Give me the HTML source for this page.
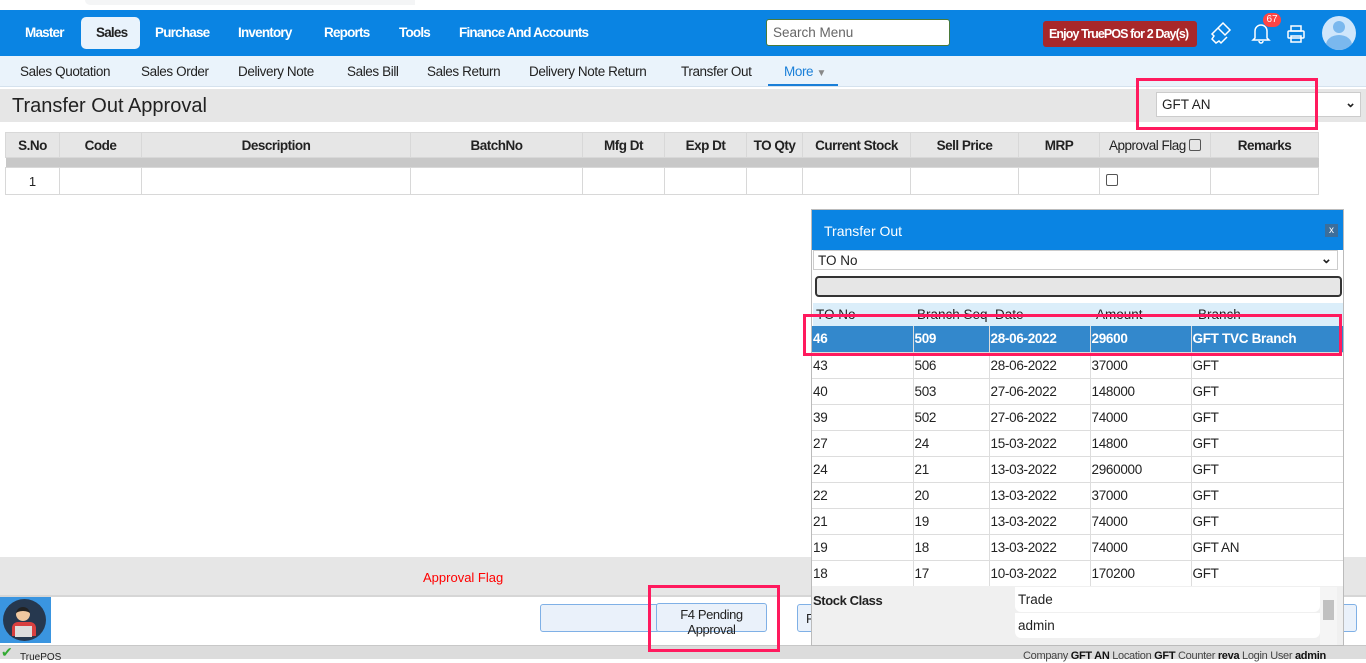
<!DOCTYPE html>
<html><head><meta charset="utf-8"><style>
*{box-sizing:border-box;margin:0;padding:0}
body{width:1366px;height:659px;overflow:hidden;background:#fff;font-family:"Liberation Sans",sans-serif;position:relative;font-size:13px;color:#222}
.a{position:absolute}
.nav{left:0;top:10px;width:1366px;height:46px;background:#0a84e3}
.nav span{position:absolute;top:15px;color:#fff;font-weight:bold;font-size:13.5px;letter-spacing:-0.8px;white-space:nowrap}
.sub{left:0;top:56px;width:1366px;height:31px;background:#eaf3fb;border-bottom:1px solid #d5e2ee}
.sub span{position:absolute;top:8px;font-size:13.5px;color:#222;letter-spacing:-0.4px;white-space:nowrap}
.red{position:absolute;border:3px solid #ff1a5e;z-index:10}
table{border-collapse:collapse}
.mt td{border:1px solid #d8d8d8;height:25px;text-align:center;padding:0}
.pt td{border-right:1px solid #ddd;border-bottom:1px solid #ddd;height:26px;padding-left:1px;font-size:13.5px;letter-spacing:-0.3px}
</style></head><body>
<div class="a" style="left:85px;top:0;width:330px;height:5px;background:#f4f5f6;border-radius:0 0 0 8px"></div>
<div class="nav a">
<div class="a" style="left:81px;top:7px;width:59px;height:32px;background:#e9f3fc;border-radius:5px"></div>
<span style="left:25px">Master</span><span style="left:96px;color:#222">Sales</span><span style="left:155px">Purchase</span><span style="left:238px">Inventory</span><span style="left:324px">Reports</span><span style="left:399px">Tools</span><span style="left:459px">Finance And Accounts</span>
<div class="a" style="left:766px;top:9px;width:184px;height:27px;background:#fff;border:1px solid #4a7a3a;border-radius:3px;color:#666;font-size:13.5px;padding:5px 6px">Search Menu</div>
<div class="a" style="left:1043px;top:11px;width:154px;height:26px;background:#a8282a;border-radius:3px;color:#fff;font-weight:bold;font-size:12.5px;letter-spacing:-0.9px;padding:6px 0 0 6px;white-space:nowrap">Enjoy TruePOS for 2 Day(s)</div>
<svg class="a" style="left:1209px;top:10px" width="24" height="26" viewBox="0 0 24 26" fill="none" stroke="#fff" stroke-width="1.5"><path d="M14 3l7 7-5 5-7-7z M9 8l-6 6 2 2-2 3 4 4 3-2 2 2 6-6"/></svg>
<svg class="a" style="left:1251px;top:12px" width="20" height="22" viewBox="0 0 20 22" fill="none" stroke="#fff" stroke-width="1.5"><path d="M4 16V9a6 6 0 0112 0v7l2 2H2z M8 19a2 2 0 004 0"/></svg>
<div class="a" style="left:1263px;top:3px;width:18px;height:14px;background:#f44;border-radius:7px;color:#fff;font-size:10px;text-align:center;line-height:14px">67</div>
<svg class="a" style="left:1286px;top:14px" width="20" height="20" viewBox="0 0 20 20" fill="none" stroke="#fff" stroke-width="1.5"><rect x="5" y="2" width="10" height="5"/><rect x="2" y="7" width="16" height="7" rx="1"/><rect x="5" y="12" width="10" height="6"/></svg>
<div class="a" style="left:1322px;top:6px;width:34px;height:34px;border-radius:50%;background:#cfe6fb;overflow:hidden"><div class="a" style="left:11px;top:5px;width:12px;height:12px;border-radius:50%;background:#7ab8ee"></div><div class="a" style="left:4px;top:19px;width:26px;height:20px;border-radius:50%;background:#7ab8ee"></div></div>
</div>
<div class="sub a">
<span style="left:20px">Sales Quotation</span><span style="left:141px">Sales Order</span><span style="left:238px">Delivery Note</span><span style="left:347px">Sales Bill</span><span style="left:427px">Sales Return</span><span style="left:529px">Delivery Note Return</span><span style="left:681px">Transfer Out</span><span style="left:784px;color:#1a7fd8">More <span style="position:static;color:#888;font-size:10px">▼</span></span>
<div class="a" style="left:768px;top:28px;width:70px;height:2px;background:#1a7fd8"></div>
</div>
<div class="a" style="left:0;top:89px;width:1366px;height:33px;background:#e6e6e6"></div>
<div class="a" style="left:12px;top:95px;font-size:20px;color:#222">Transfer Out Approval</div>
<div class="a" style="left:1156px;top:92px;width:205px;height:25px;background:#fff;border:1px solid #ccc;padding:4px 5px;font-size:13.5px">GFT AN<span style="position:absolute;right:4px;top:2px;font-size:13px;font-weight:bold">⌄</span></div>
<div class="red" style="left:1136px;top:78px;width:182px;height:52px"></div>
<table class="mt a" style="left:5px;top:132px;width:1314px">
<tr style="background:#e6e6e6;font-weight:bold;font-size:13.5px;letter-spacing:-0.5px"><td style="width:54px">S.No</td><td style="width:82px">Code</td><td style="width:269px">Description</td><td style="width:172px">BatchNo</td><td style="width:82px">Mfg Dt</td><td style="width:82px">Exp Dt</td><td style="width:56px">TO Qty</td><td style="width:108px">Current Stock</td><td style="width:108px">Sell Price</td><td style="width:81px">MRP</td><td style="width:111px;font-weight:normal">Approval Flag <span style="display:inline-block;width:12px;height:12px;border:1px solid #555;border-radius:2px;vertical-align:-1px"></span></td><td>Remarks</td></tr>
<tr style="background:#c8c8c8"><td colspan="12" style="height:10px;border:0"></td></tr>
<tr><td style="height:27px">1</td><td></td><td></td><td></td><td></td><td></td><td></td><td></td><td></td><td></td><td style="text-align:left;padding-left:6px"><span style="display:inline-block;width:12px;height:12px;border:1px solid #555;border-radius:2px"></span></td><td></td></tr>
</table>
<div class="a" style="left:0;top:557px;width:1366px;height:40px;background:#e6e6e6;border-bottom:2px solid #d6d6d6"></div>
<div class="a" style="left:423px;top:570px;color:#f00;font-size:13px">Approval Flag</div>
<div class="a" style="left:540px;top:604px;width:120px;height:28px;background:#eaf1fa;border:1px solid #7fb0e6;border-radius:3px"></div>
<div class="a" style="left:656px;top:603px;width:111px;height:29px;background:#eaf1fa;border:1px solid #7fb0e6;border-radius:3px;font-size:13px;text-align:center;line-height:15px;padding-top:3px;letter-spacing:-0.4px">F4 Pending<br>Approval</div>
<div class="a" style="left:797px;top:604px;width:560px;height:28px;background:#eaf1fa;border:1px solid #7fb0e6;border-radius:3px;padding:6px 8px">F</div>
<div class="red" style="left:648px;top:585px;width:132px;height:67px"></div>
<div class="a" style="left:0;top:597px;width:51px;height:46px;background:#3a95e0"><div class="a" style="left:3px;top:2px;width:43px;height:42px;border-radius:50%;background:#26384f"></div><div class="a" style="left:16px;top:10px;width:14px;height:14px;border-radius:50%;background:#f0c8a0;border-top:4px solid #222"></div><div class="a" style="left:12px;top:25px;width:24px;height:14px;background:#d84040;border-radius:6px 6px 0 0"></div><div class="a" style="left:15px;top:29px;width:17px;height:11px;background:#ddd"></div></div>
<div class="a" style="left:0;top:645px;width:1366px;height:14px;background:#dcdcdc;border-top:1px solid #c8c8c8"></div>
<div class="a" style="left:1px;top:645px;color:#3a3;font-size:14px;line-height:14px">✔</div>
<div class="a" style="left:20px;top:652px;font-size:10px">TruePOS</div>
<div class="a" style="left:1023px;top:650px;font-size:11px;color:#444;letter-spacing:-0.3px">Company <b style="color:#111">GFT AN</b>  Location <b style="color:#111">GFT</b>  Counter <b style="color:#111">reva</b>  Login User <b style="color:#111">admin</b></div>
<div class="a" style="left:811px;top:209px;width:533px;height:437px;background:#fff;border:1px solid #bbb;overflow:hidden">
<div class="a" style="left:0;top:0;width:533px;height:40px;background:#0a84e3"></div>
<div class="a" style="left:12px;top:13px;color:#fff;font-size:14px">Transfer Out</div>
<div class="a" style="left:513px;top:14px;width:13px;height:13px;background:#3c6e9a;color:#fff;font-size:10px;text-align:center;line-height:13px">x</div>
<div class="a" style="left:1px;top:40px;width:525px;height:20px;border:1px solid #ccc;padding:2px 4px;font-size:13.5px">TO No<span style="position:absolute;right:5px;top:0;font-weight:bold">⌄</span></div>
<div class="a" style="left:3px;top:66px;width:527px;height:21px;background:#e6e6e6;border:2px solid #333;border-radius:4px"></div>
<div class="a" style="left:1px;top:93px;width:532px;height:23px;background:#dbeefa;font-size:13.5px;color:#222;overflow:hidden"><span class="a" style="left:3px;top:4px">TO No</span><span class="a" style="left:104px;top:4px">Branch Seq</span><span class="a" style="left:182px;top:4px">Date</span><span class="a" style="left:283px;top:4px">Amount</span><span class="a" style="left:385px;top:4px">Branch</span></div>
<table class="pt a" style="left:0;top:116px;width:532px">
<tr style="background:#3388cc;color:#fff;font-weight:bold"><td style="width:101px">46</td><td style="width:76px">509</td><td style="width:101px">28-06-2022</td><td style="width:101px">29600</td><td>GFT TVC Branch</td></tr>
<tr><td>43</td><td>506</td><td>28-06-2022</td><td>37000</td><td>GFT</td></tr>
<tr><td>40</td><td>503</td><td>27-06-2022</td><td>148000</td><td>GFT</td></tr>
<tr><td>39</td><td>502</td><td>27-06-2022</td><td>74000</td><td>GFT</td></tr>
<tr><td>27</td><td>24</td><td>15-03-2022</td><td>14800</td><td>GFT</td></tr>
<tr><td>24</td><td>21</td><td>13-03-2022</td><td>2960000</td><td>GFT</td></tr>
<tr><td>22</td><td>20</td><td>13-03-2022</td><td>37000</td><td>GFT</td></tr>
<tr><td>21</td><td>19</td><td>13-03-2022</td><td>74000</td><td>GFT</td></tr>
<tr><td>19</td><td>18</td><td>13-03-2022</td><td>74000</td><td>GFT AN</td></tr>
<tr><td>18</td><td>17</td><td>10-03-2022</td><td>170200</td><td>GFT</td></tr>
</table>
<div class="a" style="left:0;top:376px;width:533px;height:61px;background:#f0f0f0"></div>
<div class="a" style="left:1px;top:383px;font-weight:bold;font-size:13px;letter-spacing:-0.4px">Stock Class</div>
<div class="a" style="left:203px;top:377px;width:305px;height:25px;background:#fff;border-radius:0 0 6px 6px;padding:5px 3px;font-size:13.5px">Trade</div>
<div class="a" style="left:203px;top:403px;width:305px;height:25px;background:#fff;border-radius:0 0 6px 6px;padding:5px 3px;font-size:13.5px">admin</div>
<div class="a" style="left:508px;top:377px;width:17px;height:60px;background:#f5f5f5"><div class="a" style="left:3px;top:13px;width:11px;height:20px;background:#c1c1c1"></div></div>
</div>
<div class="red" style="left:803px;top:314px;width:539px;height:42px"></div>
</body></html>
